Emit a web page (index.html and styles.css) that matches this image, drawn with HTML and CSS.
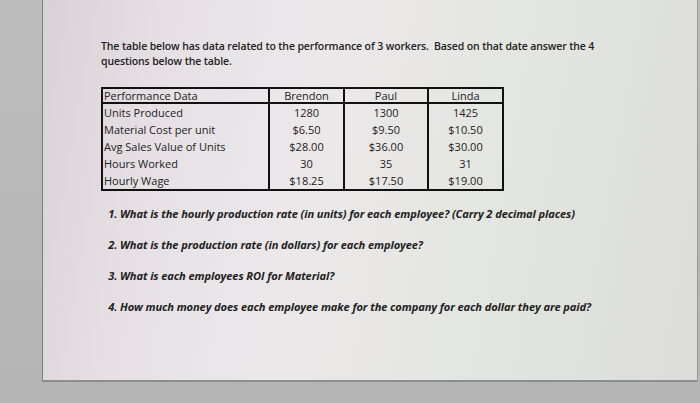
FILE: index.html
```
<!DOCTYPE html>
<html>
<head>
<meta charset="utf-8">
<link rel="stylesheet" href="styles.css">
</head>
<body>
<div class="screen">
  <div class="page">
    <p class="intro">The table below has data related to the performance of 3 workers.&nbsp; Based on that date answer the 4 questions below the table.</p>
    <table class="data">
      <thead>
        <tr><th class="label">Performance Data</th><th>Brendon</th><th>Paul</th><th>Linda</th></tr>
      </thead>
      <tbody>
        <tr><td class="label">Units Produced</td><td>1280</td><td>1300</td><td>1425</td></tr>
        <tr><td class="label">Material Cost per unit</td><td>$6.50</td><td>$9.50</td><td>$10.50</td></tr>
        <tr><td class="label">Avg Sales Value of Units</td><td>$28.00</td><td>$36.00</td><td>$30.00</td></tr>
        <tr><td class="label">Hours Worked</td><td>30</td><td>35</td><td>31</td></tr>
        <tr><td class="label">Hourly Wage</td><td>$18.25</td><td>$17.50</td><td>$19.00</td></tr>
      </tbody>
    </table>
    <ol class="questions">
      <li>What is the hourly production rate (in units) for each employee? (Carry 2 decimal places)</li>
      <li>What is the production rate (in dollars) for each employee?</li>
      <li>What is each employees ROI for Material?</li>
      <li>How much money does each employee make for the company for each dollar they are paid?</li>
    </ol>
  </div>
</div>
</body>
</html>
```
FILE: styles.css
```
html, body {
  margin: 0;
  padding: 0;
}
body {
  width: 700px;
  height: 403px;
  overflow: hidden;
  background: #b9b8b8;
  font-family: "Open Sans", "Liberation Sans", sans-serif;
  color: #1e1e1e;
}
.screen {
  width: 700px;
  height: 403px;
  background: linear-gradient(180deg, #bdbcbc 0%, #b6b5b5 100%);
}
.page {
  box-sizing: border-box;
  margin-left: 42px;
  width: 656px;
  height: 382px;
  border-left: 1px solid #7d7f7f;
  border-right: 1px solid #9a9a9a;
  border-bottom: 2px solid #8c8d8d;
  background: linear-gradient(100deg, #d8d2d6 0%, #e6e0e5 18%, #ece8ea 40%, #e4e6e1 65%, #dcddd9 100%);
  padding: 39px 0 0 58px;
}
.intro {
  margin: 0;
  width: 520px;
  font-size: 10.5px;
  font-weight: 600;
  line-height: 15px;
  letter-spacing: -0.12px;
  color: #222;
}
.data {
  margin-top: 18px;
  border-collapse: collapse;
  border: 2px solid #111;
  font-size: 11px;
  color: #222;
}
.data th, .data td {
  padding: 0 2px;
  font-weight: 400;
  text-align: center;
  border-left: 2px solid #111;
  height: 17px;
  line-height: 17px;
}
.data th {
  height: 13px;
  line-height: 13px;
  border-bottom: 2px solid #111;
}
.data .label {
  text-align: left;
  width: 162px;
  border-left: none;
  padding-left: 1px;
}
.data th:nth-child(2) { width: 69px; }
.data th:nth-child(3) { width: 78px; }
.data th:nth-child(4) { width: 69px; }
.questions {
  margin: 15px 0 0 0;
  padding: 0 0 0 19px;
  font-size: 11.1px;
  font-weight: 700;
  font-style: italic;
  color: #222;
  letter-spacing: -0.1px;
}
.questions li {
  height: 31px;
  line-height: 16px;
}
```
